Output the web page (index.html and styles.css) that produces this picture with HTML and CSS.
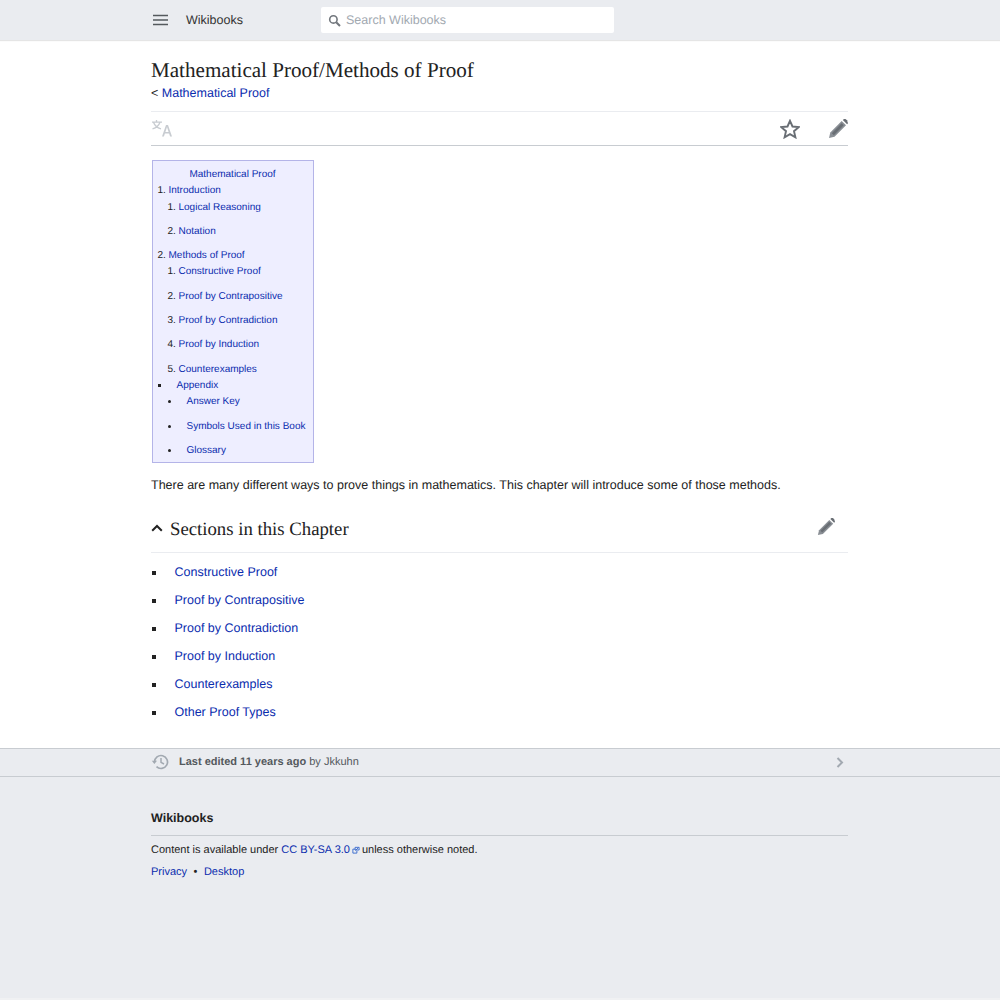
FILE: index.html
```html
<!DOCTYPE html>
<html lang="en">
<head>
<meta charset="utf-8">
<title>Mathematical Proof/Methods of Proof</title>
<link rel="stylesheet" href="styles.css">
</head>
<body>
<header class="topbar">
  <div class="wrap topbar-in">
    <svg class="burger" width="16" height="12" viewBox="0 0 16 12"><path d="M1 1.500h15M1 6h15M1 10.500h15" stroke="#54595d" stroke-width="1.400" fill="none"/></svg>
    <span class="brand">Wikibooks</span>
    <div class="search">
      <svg width="13" height="13" viewBox="0 0 13 13"><circle cx="5.400" cy="5.400" r="3.700" stroke="#72777d" stroke-width="1.600" fill="none"/><path d="M8.200 8.200l3.800 3.800" stroke="#72777d" stroke-width="2" fill="none"/></svg>
      <span class="placeholder">Search Wikibooks</span>
    </div>
  </div>
</header>
<main class="wrap content">
  <h1 class="title">Mathematical Proof/Methods of Proof</h1>
  <div class="subtitle">&lt; <a href="#">Mathematical Proof</a></div>
  <nav class="actions">
    <svg class="lang" width="22" height="18" viewBox="0 0 22 18"><g fill="none" stroke="#c8ccd1" stroke-width="1.300"><path d="M1 3.200h10M5.500 1v2.200M2.500 3.200c1 3 3.500 5.400 7.500 6.600M9 3.200c-1 3-3.500 5.400-7.500 6.600"/></g><path d="M11 17.500l4-11.500h2l4 11.500h-1.900l-1-3h-4.200l-1 3zm3.400-4.600h3.200l-1.600-5z" fill="#c8ccd1"/></svg>
    <span class="spacer"></span>
    <svg class="star" width="20" height="20" viewBox="0 0 20 20"><path d="M10 1.800l2.500 5.700 6.200.6-4.700 4.100 1.400 6.100-5.400-3.200-5.400 3.200 1.400-6.100-4.700-4.100 6.200-.6z" fill="none" stroke="#696e74" stroke-width="1.900"/></svg>
    <svg class="pencil" width="20" height="20" viewBox="0 0 20 20"><path d="M1 19l1.300-5.500L13.700 2.100 18 6.300 6.500 17.700z" fill="#8a8f95"/><path d="M14.800 1l4.300 4.200 .9-1-1-3-1.500-1.100h-1.500z" fill="#696e74"/><path d="M3.800 14.200l9.900-9.900 2 2-9.900 9.900z" fill="#696e74"/></svg>
  </nav>
  <div class="toc">
    <div class="toc-title"><a href="#">Mathematical Proof</a></div>
    <ol class="toc-top">
      <li><a href="#">Introduction</a>
        <ol class="toc-sub">
          <li><a href="#">Logical Reasoning</a></li>
          <li><a href="#">Notation</a></li>
        </ol>
      </li>
      <li><a href="#">Methods of Proof</a>
        <ol class="toc-sub">
          <li><a href="#">Constructive Proof</a></li>
          <li><a href="#">Proof by Contrapositive</a></li>
          <li><a href="#">Proof by Contradiction</a></li>
          <li><a href="#">Proof by Induction</a></li>
          <li class="last"><a href="#">Counterexamples</a></li>
        </ol>
      </li>
    </ol>
    <ul class="toc-app">
      <li><a href="#">Appendix</a>
        <ul class="toc-app-sub">
          <li><a href="#">Answer Key</a></li>
          <li><a href="#">Symbols Used in this Book</a></li>
          <li class="last"><a href="#">Glossary</a></li>
        </ul>
      </li>
    </ul>
  </div>
  <p class="intro">There are many different ways to prove things in mathematics. This chapter will introduce some of those methods.</p>
  <div class="section-head">
    <svg class="chev" width="12" height="8" viewBox="0 0 12 8"><path d="M1.200 6.800L6 2l4.800 4.800" fill="none" stroke="#222" stroke-width="2"/></svg>
    <h2 class="section-title">Sections in this Chapter</h2>
    <svg class="pencil" width="18" height="18" viewBox="0 0 20 20"><path d="M1 19l1.300-5.500L13.700 2.100 18 6.300 6.500 17.700z" fill="#8a8f95"/><path d="M14.800 1l4.300 4.200 .9-1-1-3-1.500-1.100h-1.500z" fill="#696e74"/><path d="M3.800 14.200l9.900-9.900 2 2-9.900 9.900z" fill="#696e74"/></svg>
  </div>
  <ul class="links">
    <li><a href="#">Constructive Proof</a></li>
    <li><a href="#">Proof by Contrapositive</a></li>
    <li><a href="#">Proof by Contradiction</a></li>
    <li><a href="#">Proof by Induction</a></li>
    <li><a href="#">Counterexamples</a></li>
    <li><a href="#">Other Proof Types</a></li>
  </ul>
</main>
<footer class="footer">
  <div class="edited">
    <div class="wrap edited-in">
      <svg class="clock" width="18" height="16" viewBox="0 0 18 16"><path d="M3.500 8a6.500 6.500 0 1 1 2 4.700" fill="none" stroke="#a2a9b1" stroke-width="1.700"/><path d="M0.800 6.800h5.200L3.400 10z" fill="#a2a9b1"/><path d="M10 4v4.300l3 1.700" fill="none" stroke="#a2a9b1" stroke-width="1.500"/></svg>
      <span class="edited-text"><b>Last edited 11 years ago</b> by Jkkuhn</span>
      <svg class="arrow" width="8" height="11" viewBox="0 0 8 11"><path d="M1.500 1l4.500 4.500-4.500 4.500" fill="none" stroke="#a2a9b1" stroke-width="2"/></svg>
    </div>
  </div>
  <div class="wrap foot-in">
    <div class="foot-brand">Wikibooks</div>
    <p class="license">Content is available under <a href="#">CC BY-SA 3.0</a><svg class="ext" width="8" height="8" viewBox="0 0 9 9"><path d="M5.500 5.500v2.500h-4.500v-4.500h2.500" fill="none" stroke="#36c" stroke-width="1"/><path d="M3.500 1.500h4.500v3h-4.500zM4 5l3-3" fill="none" stroke="#36c" stroke-width="1"/></svg>unless otherwise noted.</p>
    <p class="foot-links"><a href="#">Privacy</a><span class="dot">•</span><a href="#">Desktop</a></p>
  </div>
</footer>
</body>
</html>
```
FILE: styles.css
```css
* { box-sizing: border-box; }
html, body { margin: 0; padding: 0; }
body {
  font-family: "Liberation Sans", Arial, sans-serif;
  font-size: 12.5px;
  color: #222;
  background: #fff;
  text-rendering: geometricPrecision;
}
a { color: #0a2cae; text-decoration: none; }
.wrap { width: 697px; margin-left: 151px; }

.topbar {
  height: 40px;
  background: #eaecf0;
  box-shadow: 0 1px 1px rgba(0,0,0,.1);
}
.topbar-in { display: flex; align-items: center; height: 40px; }
.burger { margin-left: 1px; flex: none; }
.brand { margin-left: 18px; color: #333; width: 135px; flex: none; }
.search {
  width: 293px; height: 26px; background: #fff; border-radius: 2px;
  display: flex; align-items: center; padding-left: 7px; gap: 5px;
}
.placeholder { color: #a2a9b1; }

.title {
  font-family: "Liberation Serif", "Times New Roman", serif;
  font-weight: normal; font-size: 21.100px; line-height: 28px; margin: 16px 0 0;
  color: #222;
}
.subtitle { line-height: 17px; margin-top: 1px; }
.actions {
  margin-top: 9px; height: 35px;
  border-top: 1px solid #eaecf0; border-bottom: 1px solid #c8ccd1;
  display: flex; align-items: center;
}
.lang { margin-top: -2px; }
.spacer { flex: 1; }
.star { margin-right: 28px; }

.toc {
  width: 162px; height: 303px; margin: 14px 0 0 0.5px; background: #eeeeff;
  border: 1px solid #b4b4e8;
  padding: 6px 5px 5px; font-size: 10px; line-height: 16.300px;
}
.toc ol, .toc ul { margin: 0; padding: 0; }
.toc-title { text-align: center; }
.toc-top { margin-left: 11px !important; }
.toc-sub { margin-left: 10px !important; }
.toc-sub li { margin-bottom: 8px; }
.toc-sub li.last { margin-bottom: 0; }
.toc-app { list-style: square; margin-left: 12px !important; }
.toc-app > li { padding-left: 7px; }
.toc-app-sub { list-style: disc; margin-left: 3px !important; }
.toc-app-sub li { margin-bottom: 8px; padding-left: 7px; white-space: nowrap; }
.toc-app-sub li.last { margin-bottom: 0; }

.intro { margin: 13px 0 0; line-height: 18px; }
.section-head {
  display: flex; align-items: center; height: 47px; margin-top: 12px;
  border-bottom: 1px solid #eaecf0;
}
.chev { flex: none; margin-top: -3px; }
.section-title {
  font-family: "Liberation Serif", "Times New Roman", serif;
  font-weight: normal; font-size: 18.750px; line-height: 26px; margin: 2px 0 0 7px; flex: 1;
}
.section-head .pencil { margin-right: 13px; margin-top: -4px; }
.links { list-style: square; margin: 0 0 0 14.500px; padding: 8.500px 0 0; line-height: 20px; }
.links li { margin-bottom: 8px; padding-left: 9px; }
.links li:last-child { margin-bottom: 0; }

.footer { background: #eaecf0; height: 252px; margin-top: 26.500px; border-bottom: 2px solid #f0f1f3; }
.edited { height: 29px; border-top: 1px solid #c8ccd1; border-bottom: 1px solid #c8ccd1; }
.edited-in { display: flex; align-items: center; height: 26px; }
.edited-text { margin-left: 10px; font-size: 11px; color: #54595d; flex: 1; }
.arrow { margin-right: 4px; }
.foot-in { padding-top: 33px; }
.foot-brand { font-weight: bold; line-height: 16px; padding-bottom: 9px; border-bottom: 1px solid #c8ccd1; }
.license { margin: 6px 0 0; font-size: 11px; line-height: 16px; color: #222; }
.ext { margin: 0 2px; vertical-align: -1px; }
.foot-links { margin: 6px 0 0; font-size: 11px; line-height: 16px; }
.dot { margin: 0 6.500px; color: #222; }
```
